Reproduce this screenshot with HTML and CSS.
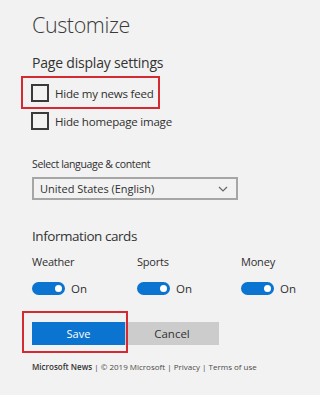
FILE: index.html
```html
<!DOCTYPE html>
<html lang="en">
<head>
    <meta charset="UTF-8">
    <meta name="viewport" content="width=device-width, initial-scale=1.0">
    <title>Customize</title>
    <link rel="stylesheet" href="styles.css">
</head>
<body>
    <main class="panel">
        <h1 class="panel-title">Customize</h1>

        <section class="settings-group">
            <h2 class="group-title">Page display settings</h2>
            <label class="check-row marked">
                <span class="check-box"></span>
                Hide my news feed
            </label>
            <label class="check-row">
                <span class="check-box"></span>
                Hide homepage image
            </label>
        </section>

        <section class="language-group">
            <div class="field-label">Select language &amp; content</div>
            <div class="select-box">
                <span>United States (English)</span>
                <svg class="chevron" width="10" height="6" viewBox="0 0 10 6">
                    <path d="M1 1 L5 5 L9 1" fill="none" stroke="#666" stroke-width="1.2"/>
                </svg>
            </div>
        </section>

        <section class="cards-group">
            <h2 class="group-title">Information cards</h2>
            <div class="card-grid">
                <div class="card-item">
                    <div class="card-name">Weather</div>
                    <div class="toggle-row"><span class="toggle"></span>On</div>
                </div>
                <div class="card-item">
                    <div class="card-name">Sports</div>
                    <div class="toggle-row"><span class="toggle"></span>On</div>
                </div>
                <div class="card-item">
                    <div class="card-name">Money</div>
                    <div class="toggle-row"><span class="toggle"></span>On</div>
                </div>
            </div>
        </section>

        <div class="actions">
            <button class="btn btn-save marked">Save</button>
            <button class="btn btn-cancel">Cancel</button>
        </div>

        <footer class="page-footer">
            <span class="brand">Microsoft News</span> | © 2019 Microsoft | Privacy | Terms of use
        </footer>
    </main>
</body>
</html>
```

FILE: styles.css
```css
body {
    margin: 0;
    padding: 0;
    background: #f2f2f2;
    font-family: 'Open Sans', 'Noto Sans', sans-serif;
    color: #2f2f2f;
}
.panel {
    padding: 11px 0 0 32px;
}
.panel-title {
    margin: 0;
    font-size: 21.5px;
    line-height: 28px;
    font-weight: 300;
    letter-spacing: -0.4px;
    color: #3a3a3a;
}
.group-title {
    margin: 0;
    font-size: 14px;
    line-height: 20px;
    font-weight: 400;
    letter-spacing: -0.2px;
    color: #333;
}
.settings-group .group-title {
    margin-top: 14px;
}
.check-row {
    position: relative;
    display: flex;
    align-items: center;
    width: max-content;
    height: 18px;
    font-size: 11.5px;
    letter-spacing: -0.2px;
    margin-top: 11px;
}
.check-row + .check-row {
    margin-top: 10px;
}
.check-box {
    width: 14px;
    height: 14px;
    border: 2px solid #3a3a3a;
    margin-right: 6px;
    margin-left: -1px;
}
.marked::after {
    content: '';
    position: absolute;
    border: 2px solid #d42a32;
}
.check-row.marked::after {
    left: -11px;
    top: -8px;
    right: -6px;
    bottom: -7px;
}
.language-group {
    margin-top: 26px;
}
.field-label {
    font-size: 10.5px;
    line-height: 16px;
    letter-spacing: -0.35px;
}
.select-box {
    margin-top: 5px;
    height: 19px;
    border: 2px solid #a6a6a6;
    display: flex;
    align-items: center;
    justify-content: space-between;
    padding-left: 6px;
    width: 196px;
    font-size: 11px;
}
.chevron {
    margin-right: 8px;
}
.cards-group {
    margin-top: 26px;
}
.cards-group .group-title {
    font-size: 13.5px;
    letter-spacing: -0.45px;
}
.card-grid {
    display: grid;
    grid-template-columns: 105px 104px auto;
    margin-top: 7px;
}
.card-name {
    font-size: 11px;
    line-height: 18px;
    letter-spacing: -0.2px;
}
.toggle-row {
    display: flex;
    align-items: center;
    margin-top: 10px;
    font-size: 11.5px;
}
.toggle {
    position: relative;
    width: 33px;
    height: 13px;
    border-radius: 7px;
    background: #0a74d0;
    margin-right: 6px;
}
.toggle::after {
    content: '';
    position: absolute;
    right: 3px;
    top: 3px;
    width: 7px;
    height: 7px;
    border-radius: 50%;
    background: #fff;
}
.actions {
    display: flex;
    margin-top: 26px;
}
.btn {
    height: 23px;
    width: 93px;
    border: none;
    padding: 0;
    font-family: inherit;
    font-size: 11px;
}
.btn-save {
    position: relative;
    background: #0a74d0;
    color: #fff;
}
.btn-save.marked::after {
    left: -10px;
    top: -11px;
    right: -3px;
    bottom: -8px;
}
.btn-cancel {
    background: #cccccc;
    color: #333;
    width: 94px;
    font-size: 11.5px;
}
.page-footer {
    margin-top: 16px;
    font-size: 8px;
    line-height: 12px;
    color: #4a4a4a;
}
.brand {
    color: #333;
    font-weight: 600;
}
```
